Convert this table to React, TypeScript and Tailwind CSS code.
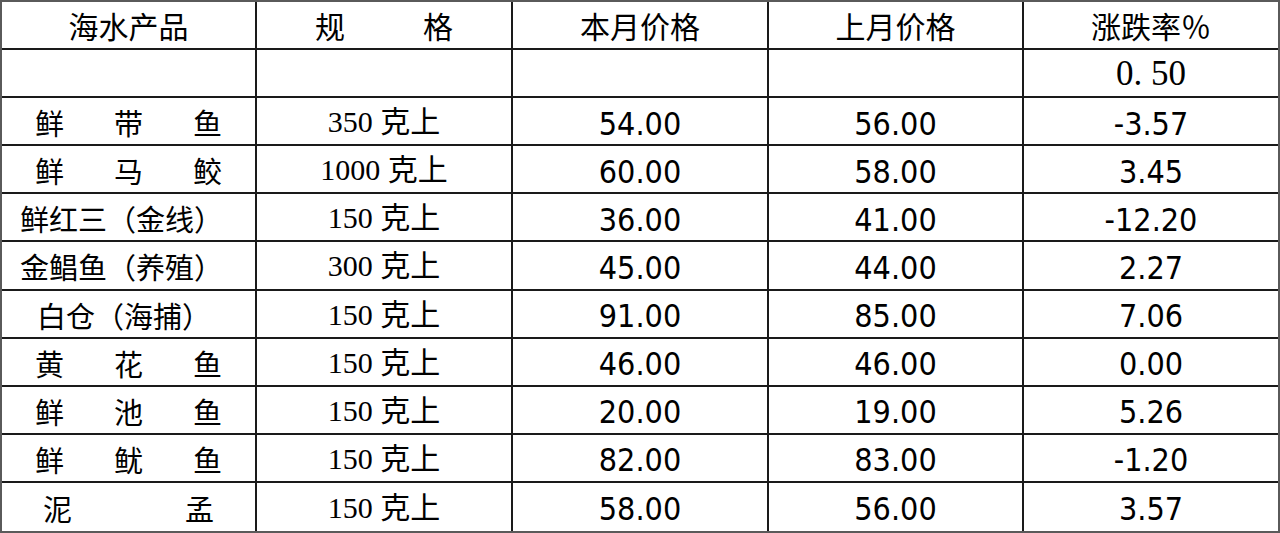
import React from 'react';

type Row = {
    name: string[];
    pad?: string;
    spec: string;
    now: string;
    last: string;
    rate: string;
};

const rows: Row[] = [
    {name: ['鲜', '带', '鱼'], pad: 'px-[33px]', spec: '350', now: '54.00', last: '56.00', rate: '-3.57'},
    {name: ['鲜', '马', '鲛'], pad: 'px-[33px]', spec: '1000', now: '60.00', last: '58.00', rate: '3.45'},
    {name: ['鲜红三（金线）'], pad: 'pl-[18px]', spec: '150', now: '36.00', last: '41.00', rate: '-12.20'},
    {name: ['金鲳鱼（养殖）'], pad: 'pl-[18px]', spec: '300', now: '45.00', last: '44.00', rate: '2.27'},
    {name: ['白仓（海捕）'], pad: 'pl-[35px]', spec: '150', now: '91.00', last: '85.00', rate: '7.06'},
    {name: ['黄', '花', '鱼'], pad: 'px-[33px]', spec: '150', now: '46.00', last: '46.00', rate: '0.00'},
    {name: ['鲜', '池', '鱼'], pad: 'px-[33px]', spec: '150', now: '20.00', last: '19.00', rate: '5.26'},
    {name: ['鲜', '鱿', '鱼'], pad: 'px-[33px]', spec: '150', now: '82.00', last: '83.00', rate: '-1.20'},
    {name: ['泥', '孟'], pad: 'px-[41px]', spec: '150', now: '58.00', last: '56.00', rate: '3.57'},
];

const hei = "font-['Noto_Sans_CJK_SC',sans-serif]";
const num = "font-['DejaVu_Sans_Condensed','DejaVu_Sans',sans-serif] font-stretch-condensed text-[32px] pt-[5px]";
const song = "font-['Liberation_Serif','Noto_Sans_CJK_SC',serif]";
const line = 'border-[#1a1a1a] leading-none min-h-0 overflow-hidden';

const App = () => {
    return (
        <div className="w-[1280px] h-[533px] bg-white text-black border-2 border-[#5a5a5a] grid grid-cols-[255px_256px_256px_255px_1fr] grid-rows-[repeat(11,minmax(0,1fr))] overflow-hidden">
            {/* header */}
            <div className={`border-r-2 border-b-2 ${line} flex items-center justify-center text-[30px] ${hei}`}>海水产品</div>
            <div className={`border-r-2 border-b-2 ${line} flex items-center justify-between px-[58px] text-[30px] ${hei}`}>
                <span>规</span><span>格</span>
            </div>
            <div className={`border-r-2 border-b-2 ${line} flex items-center justify-center text-[30px] ${hei}`}>本月价格</div>
            <div className={`border-r-2 border-b-2 ${line} flex items-center justify-center text-[30px] ${hei}`}>上月价格</div>
            <div className={`border-b-2 ${line} flex items-center justify-center text-[30px] ${hei}`}>涨跌率％</div>

            {/* blank row */}
            <div className={`border-r-2 border-b-2 ${line}`}></div>
            <div className={`border-r-2 border-b-2 ${line}`}></div>
            <div className={`border-r-2 border-b-2 ${line}`}></div>
            <div className={`border-r-2 border-b-2 ${line}`}></div>
            <div className={`border-b-2 ${line} flex items-center justify-center text-[35px] ${song}`}>0.&nbsp;50</div>

            {rows.map((r, i) => {
                const last = i === rows.length - 1;
                const b = last ? '' : 'border-b-2';
                return (
                    <React.Fragment key={i}>
                        <div className={`border-r-2 ${b} ${line} flex items-center pt-[3px] text-[29px] ${hei} ${r.pad} ${r.name.length > 1 ? 'justify-between' : ''}`}>
                            {r.name.map((c, j) => <span key={j}>{c}</span>)}
                        </div>
                        <div className={`border-r-2 ${b} ${line} flex items-center justify-center pt-[2px] text-[30px] ${song}`}>
                            {r.spec} 克上
                        </div>
                        <div className={`border-r-2 ${b} ${line} flex items-center justify-center ${num}`}>{r.now}</div>
                        <div className={`border-r-2 ${b} ${line} flex items-center justify-center ${num}`}>{r.last}</div>
                        <div className={`${b} ${line} flex items-center justify-center ${num}`}>{r.rate}</div>
                    </React.Fragment>
                );
            })}
        </div>
    );
};

export default App;
